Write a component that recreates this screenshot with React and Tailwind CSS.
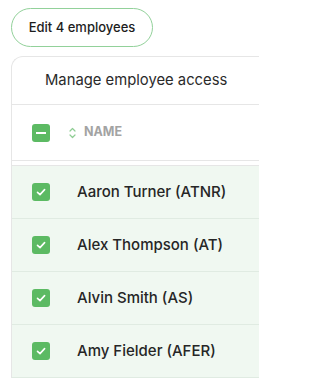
import React from 'react';

const people = ['Aaron Turner (ATNR)', 'Alex Thompson (AT)', 'Alvin Smith (AS)', 'Amy Fielder (AFER)'];

function Check() {
  return (
    <div className="w-[18px] h-[18px] rounded-[3px] bg-[#5cba63] flex items-center justify-center">
      <svg width="12" height="12" viewBox="0 0 12 12" fill="none">
        <path d="M2.5 6.3 L5 8.6 L9.6 3.6" stroke="white" strokeWidth="1.6" strokeLinecap="round" strokeLinejoin="round" />
      </svg>
    </div>
  );
}

export default function App() {
  return (
    <div className="w-[259px] h-[378px] bg-white overflow-hidden font-['Inter',sans-serif] text-[#222]">
      <div className="pt-[8px] pl-[11px]">
        <button className="h-[39px] w-[142px] rounded-full border border-[#92d19a] bg-white text-[13px] font-medium text-[#1d1d1d] flex items-center justify-center">
          Edit 4 employees
        </button>
      </div>

      <div className="mt-[9px] ml-[11px] w-[270px] border-l border-t border-[#e6e6e6] rounded-tl-[12px]">
        <div className="h-[48px] pl-[33px] flex items-center border-b border-[#e6e6e6] text-[14.8px] text-[#2a2a2a]">
          Manage employee access
        </div>

        <div className="h-[56px] pl-[20px] flex items-center border-b border-[#e6e6e6]">
          <div className="w-[18px] h-[18px] rounded-[3px] bg-[#5cba63] flex items-center justify-center">
            <div className="w-[10px] h-[2px] bg-white" />
          </div>
          <svg className="ml-[19px]" width="7" height="12" viewBox="0 0 7 12" fill="none">
            <path d="M1 4 L3.5 1.5 L6 4" stroke="#8fcd94" strokeWidth="1.2" strokeLinecap="round" strokeLinejoin="round" />
            <path d="M1 8 L3.5 10.5 L6 8" stroke="#8fcd94" strokeWidth="1.2" strokeLinecap="round" strokeLinejoin="round" />
          </svg>
          <span className="ml-[8px] text-[12.5px] font-bold text-[#a3a3a3]">NAME</span>
        </div>

        <div className="h-[4px]" />

        <div className="border-t border-[#e6e6e6]">
          {people.map((p) => (
            <div key={p} className="h-[53px] pl-[20px] flex items-center bg-[#f0f8f1] border-b border-[#e0ebe2]">
              <Check />
              <span className="ml-[27px] text-[15px] font-medium text-[#262626]">{p}</span>
            </div>
          ))}
        </div>
      </div>
    </div>
  );
}
